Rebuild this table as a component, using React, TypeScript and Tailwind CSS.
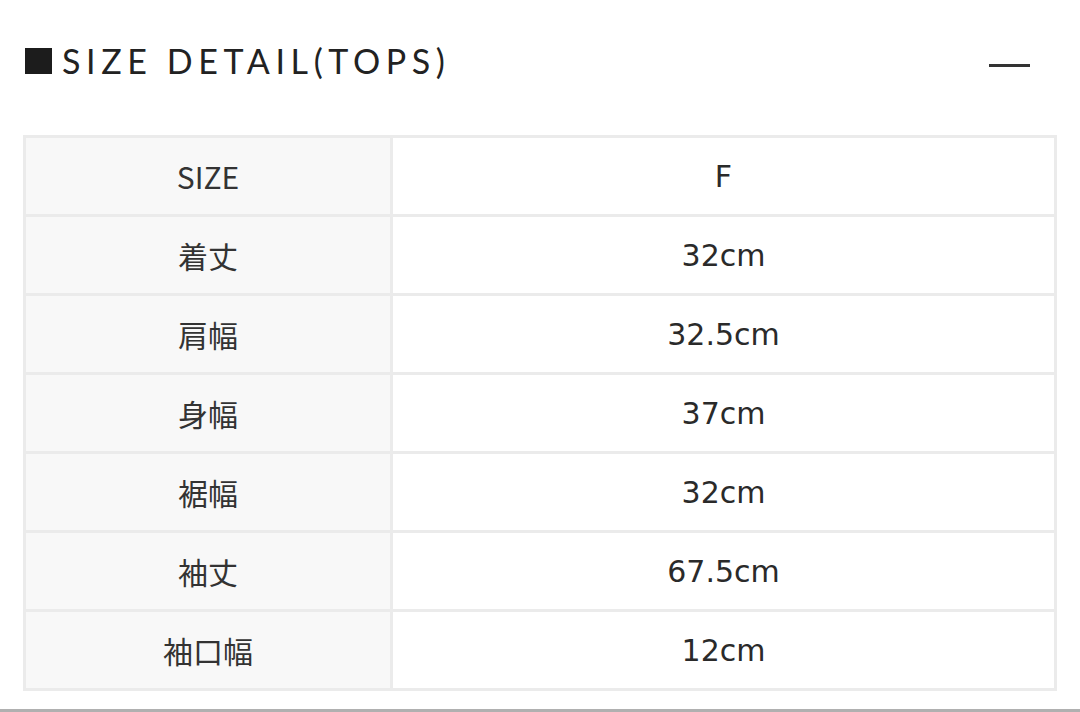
const ROWS: [string, string][] = [
  ["SIZE", "F"],
  ["着丈", "32cm"],
  ["肩幅", "32.5cm"],
  ["身幅", "37cm"],
  ["裾幅", "32cm"],
  ["袖丈", "67.5cm"],
  ["袖口幅", "12cm"],
];

export default function App() {
  return (
    <div className="w-[1080px] h-[712px] bg-white relative overflow-hidden">
      <div className="flex justify-between items-start pl-[25px] pr-[50px] pt-[41px] h-[135px]">
        <div className="flex items-center gap-[10px] h-[40px]">
          <span className="w-[27px] h-[26px] bg-[#1c1c1c]" />
          <h2 className="text-[34px] leading-none tracking-[0.165em] text-[#222] font-['Lato','Liberation_Sans',sans-serif]">
            SIZE DETAIL(TOPS)
          </h2>
        </div>
        <span className="mt-[23px] w-[41px] h-[3px] bg-[#333]" />
      </div>
      <div className="mx-[23px] border-x-[3px] border-b-[3px] border-[#ebebeb]">
        {ROWS.map(([k, v]) => (
          <div key={k} className="flex h-[79px] border-t-[3px] border-[#ebebeb]">
            <div className="w-[367px] bg-[#f8f8f8] border-r-[3px] border-[#ebebeb] flex items-center justify-center text-[30px] text-[#333] font-['Noto_Sans_CJK_JP',sans-serif]">
              {k}
            </div>
            <div className="flex-1 flex items-center justify-center text-[30px] text-[#2a2a2a] font-['DejaVu_Sans',sans-serif]">
              {v}
            </div>
          </div>
        ))}
      </div>
      <div className="absolute left-0 right-0 bottom-0 h-[3px] bg-[#b0b0b0]" />
    </div>
  );
}
